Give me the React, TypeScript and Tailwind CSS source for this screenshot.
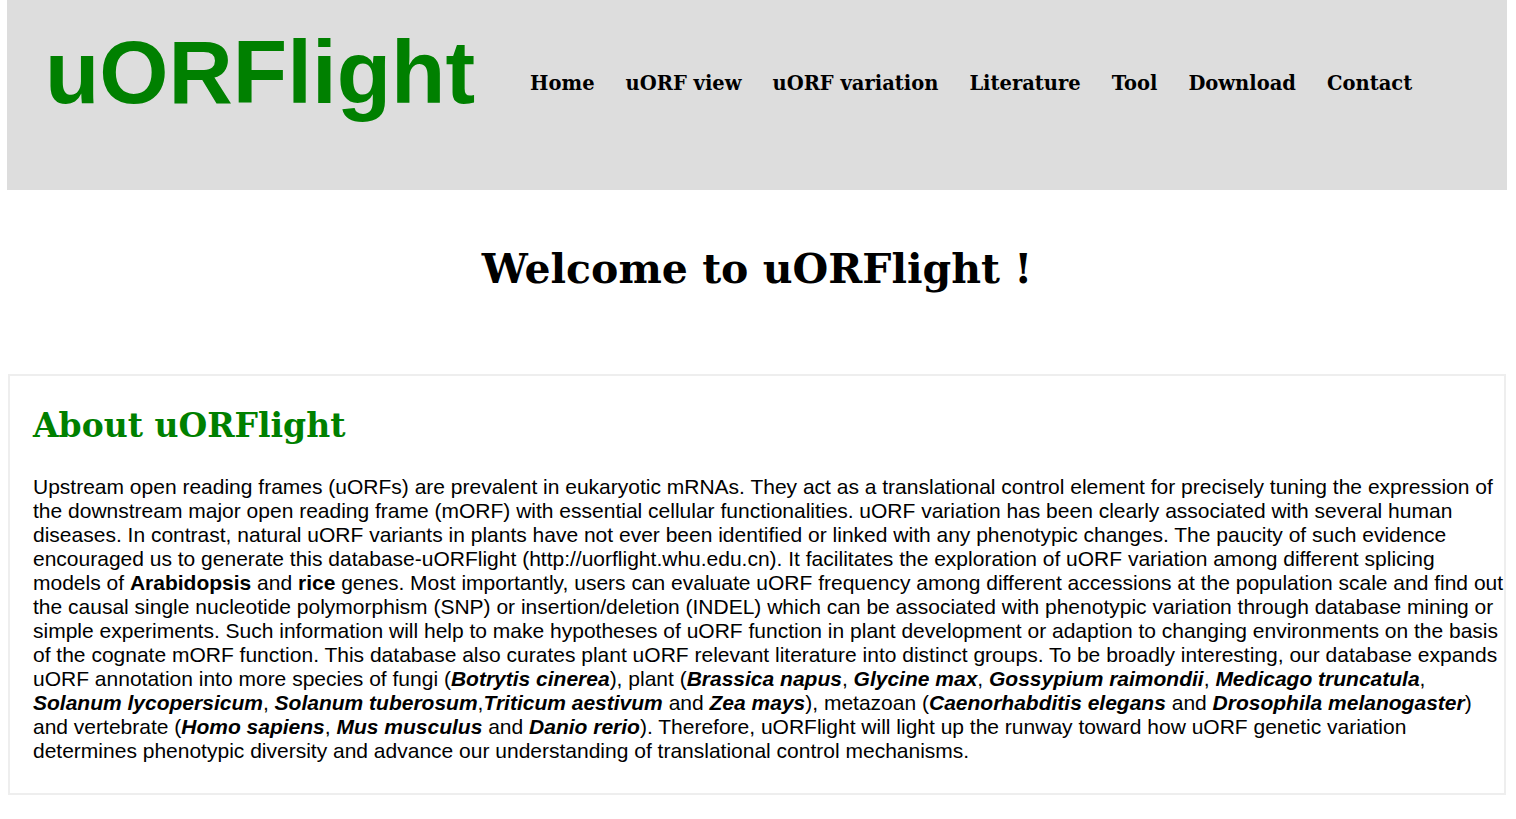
import React from "react";

const NAV = ["Home", "uORF view", "uORF variation", "Literature", "Tool", "Download", "Contact"];

const serif = { fontFamily: '"DejaVu Serif", Georgia, serif' };

function Sp({ children }: { children: React.ReactNode }) {
  return <b className="italic font-bold">{children}</b>;
}

export default function App() {
  return (
    <div className="min-h-[819px] bg-white text-black">
      <div className="ml-[7px] w-[1500px]">
        {/* header */}
        <header className="flex h-[190px] items-start bg-[#dddddd] pl-[38px]">
          <h1 className="mt-[28px] text-[89px] font-bold leading-none text-[#008000] [font-family:'Liberation_Sans',Arial,sans-serif]">
            uORFlight
          </h1>
          <nav className="ml-[55px] mt-[74px] flex gap-[31px]">
            {NAV.map((n) => (
              <a
                key={n}
                href="#"
                className="text-[19.5px] font-bold leading-none text-black"
                style={serif}
              >
                {n}
              </a>
            ))}
          </nav>
        </header>

        {/* welcome */}
        <h2
          className="mt-[59px] text-center text-[41px] font-bold leading-none"
          style={serif}
        >
          Welcome to uORFlight !
        </h2>

        {/* about box */}
        <section className="ml-[1px] mt-[84px] w-[1498px] border-2 border-[#eeeeee] pb-[30px] pl-[23px] pt-[33px]">
          <h3
            className="text-[33px] font-bold leading-none text-[#008000]"
            style={serif}
          >
            About uORFlight
          </h3>
          <p className="mt-[33px] whitespace-nowrap text-[21px] leading-[24px] [font-family:'Liberation_Sans',Arial,sans-serif]">
            Upstream open reading frames (uORFs) are prevalent in eukaryotic mRNAs. They act as a translational control element for precisely tuning the expression of
            <br />
            the downstream major open reading frame (mORF) with essential cellular functionalities. uORF variation has been clearly associated with several human
            <br />
            diseases. In contrast, natural uORF variants in plants have not ever been identified or linked with any phenotypic changes. The paucity of such evidence
            <br />
            encouraged us to generate this database-uORFlight (http://uorflight.whu.edu.cn). It facilitates the exploration of uORF variation among different splicing
            <br />
            models of <b>Arabidopsis</b> and <b>rice</b> genes. Most importantly, users can evaluate uORF frequency among different accessions at the population scale and find out
            <br />
            the causal single nucleotide polymorphism (SNP) or insertion/deletion (INDEL) which can be associated with phenotypic variation through database mining or
            <br />
            simple experiments. Such information will help to make hypotheses of uORF function in plant development or adaption to changing environments on the basis
            <br />
            of the cognate mORF function. This database also curates plant uORF relevant literature into distinct groups. To be broadly interesting, our database expands
            <br />
            uORF annotation into more species of fungi (<Sp>Botrytis cinerea</Sp>), plant (<Sp>Brassica napus</Sp>, <Sp>Glycine max</Sp>, <Sp>Gossypium raimondii</Sp>, <Sp>Medicago truncatula</Sp>,
            <br />
            <Sp>Solanum lycopersicum</Sp>, <Sp>Solanum tuberosum</Sp>,<Sp>Triticum aestivum</Sp> and <Sp>Zea mays</Sp>), metazoan (<Sp>Caenorhabditis elegans</Sp> and <Sp>Drosophila melanogaster</Sp>)
            <br />
            and vertebrate (<Sp>Homo sapiens</Sp>, <Sp>Mus musculus</Sp> and <Sp>Danio rerio</Sp>). Therefore, uORFlight will light up the runway toward how uORF genetic variation
            <br />
            determines phenotypic diversity and advance our understanding of translational control mechanisms.
          </p>
        </section>
      </div>
    </div>
  );
}
